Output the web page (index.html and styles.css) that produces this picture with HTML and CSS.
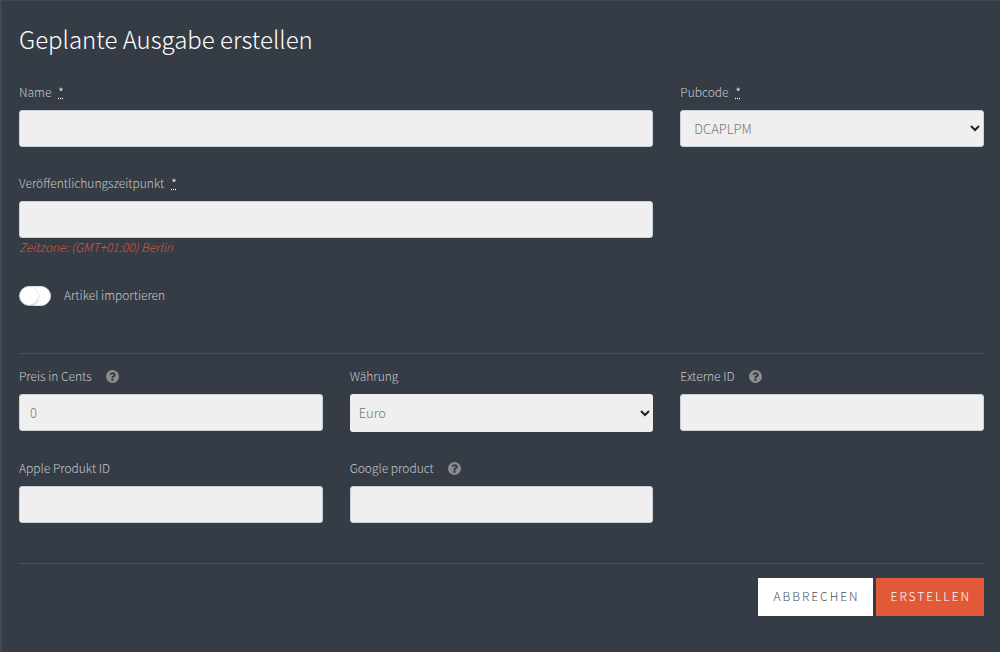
FILE: index.html
```html
<!DOCTYPE html>
<html lang="de">
<head>
<meta charset="utf-8">
<title>Geplante Ausgabe erstellen</title>
<link rel="stylesheet" href="styles.css">
</head>
<body>

<svg class="sprite" aria-hidden="true">
    <symbol id="help" viewBox="0 0 1536 1536">
        <path fill-rule="evenodd" d="M768 0a768 768 0 1 1 0 1536a768 768 0 1 1 0-1536zM896 1248v-192q0-14-9-23t-23-9h-192q-14 0-23 9t-9 23v192q0 14 9 23t23 9h192q14 0 23-9t9-23zM1152 576q0-88-55.500-163t-138.500-116t-170-41q-243 0-371 213q-15 24 8 42l132 100q7 6 19 6q16 0 25-12q53-68 86-92q34-24 86-24q48 0 85.500 26t37.500 59q0 38-20 61t-68 45q-63 28-115.500 86.500t-52.500 125.500v36q0 14 9 23t23 9h192q14 0 23-9t9-23q0-19 21.500-49.500t54.500-49.500q32-18 49-28.500t46-35t44.500-48t28-60.500t12.500-81z"/>
    </symbol>
</svg>

<form class="panel">
    <h1 class="title">Geplante Ausgabe erstellen</h1>

    <div class="grid">
        <div class="field wide">
            <label for="name">Name <abbr title="erforderlich">*</abbr></label>
            <input class="control" type="text" id="name">
        </div>
        <div class="field">
            <label for="pubcode">Pubcode <abbr title="erforderlich">*</abbr></label>
            <select class="control bordered" id="pubcode">
                <option>DCAPLPM</option>
            </select>
        </div>
        <div class="field wide">
            <label for="publish_at">Veröffentlichungszeitpunkt <abbr title="erforderlich">*</abbr></label>
            <input class="control" type="text" id="publish_at">
            <p class="hint">Zeitzone: (GMT+01:00) Berlin</p>
        </div>
    </div>

    <div class="switch-row">
        <input class="switch" type="checkbox" id="import">
        <label for="import">Artikel importieren</label>
    </div>

    <div class="grid section">
        <div class="field">
            <label for="price">Preis in Cents <svg class="help"><use href="#help"/></svg></label>
            <input class="control" type="text" id="price" value="0">
        </div>
        <div class="field">
            <label for="currency">Währung</label>
            <select class="control" id="currency">
                <option>Euro</option>
            </select>
        </div>
        <div class="field">
            <label for="external">Externe ID <svg class="help"><use href="#help"/></svg></label>
            <input class="control" type="text" id="external">
        </div>
        <div class="field">
            <label for="apple">Apple Produkt ID</label>
            <input class="control" type="text" id="apple">
        </div>
        <div class="field">
            <label for="google">Google product <svg class="help"><use href="#help"/></svg></label>
            <input class="control" type="text" id="google">
        </div>
    </div>

    <div class="actions section">
        <button class="btn" type="button">Abbrechen</button>
        <button class="btn primary" type="submit">Erstellen</button>
    </div>
</form>

</body>
</html>
```

FILE: styles.css
```css
* {
    box-sizing: border-box;
}
body {
    margin: 0;
    background: #363c46;
    color: #c4c7cc;
    font: 200 12px/20px "Noto Sans CJK SC Light", "Noto Sans CJK SC", "Open Sans", sans-serif;
}
.sprite {
    display: none;
}
.panel {
    min-height: 100vh;
    padding: 20px 16px 36px 17px;
    border-left: 2px solid #414852;
    border-top: 1px solid #414852;
}
.title {
    margin: 0 0 25px;
    color: #fff;
    font-size: 24px;
    font-weight: 200;
    line-height: 36px;
}
.grid {
    display: grid;
    grid-template-columns: repeat(3, 1fr);
    gap: 26px 27px;
}
.wide {
    grid-column: span 2;
}
.field label {
    display: flex;
    align-items: center;
    margin-bottom: 8px;
}
abbr {
    margin-left: 7px;
    color: #fff;
}
.help {
    width: 13px;
    height: 13px;
    margin-left: 14px;
    fill: #8d8d8d;
}
.control {
    display: block;
    width: 100%;
    height: 37px;
    padding: 0 10px;
    border: 1px solid #c8d0da;
    border-radius: 3px;
    background: #efefef;
    color: #222;
    font: inherit;
    font-size: 13px;
    -webkit-text-fill-color: #777;
}
select.control {
    height: 38px;
    padding: 0 5px 1px;
    border: 0;
}
select.bordered {
    height: 37px;
    padding: 0 0 1px 9px;
    border: 1px solid #c8d0da;
}
.hint {
    margin: 0;
    color: #d9553a;
    font-style: italic;
    line-height: 18px;
}
.switch-row {
    display: flex;
    align-items: flex-start;
    gap: 13px;
    margin: 30px 0 47px;
}
.switch-row label {
    line-height: 18px;
}
.switch {
    appearance: none;
    width: 32px;
    height: 20px;
    margin: 0;
    border: 1px solid #dfdfdf;
    border-radius: 10px;
    background: #fff;
}
.switch::before {
    content: "";
    display: block;
    width: 18px;
    height: 18px;
    border-radius: 50%;
    background: #fff;
    box-shadow: 0 1px 3px rgba(0, 0, 0, 0.3);
}
.section {
    padding-top: 12px;
    border-top: 1px solid #4a515b;
}
.actions {
    display: flex;
    justify-content: flex-end;
    gap: 3px;
    margin-top: 40px;
    padding-top: 14px;
}
.btn {
    height: 38px;
    padding: 0 13px 2px 15px;
    border: 0;
    background: #fff;
    color: #4b525c;
    font: inherit;
    letter-spacing: 2px;
    text-transform: uppercase;
}
.primary {
    background: #e25938;
    color: #fff;
}
```
